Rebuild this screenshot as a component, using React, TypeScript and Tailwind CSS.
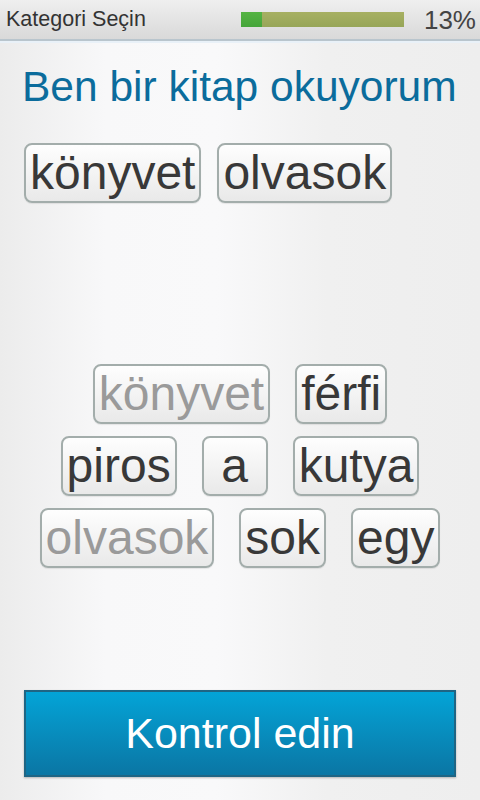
import React from 'react';

interface Word {
  text: string;
  used?: boolean;
}

const answer: Word[] = [{ text: 'könyvet' }, { text: 'olvasok' }];

const bankRows: Word[][] = [
  [{ text: 'könyvet', used: true }, { text: 'férfi' }],
  [{ text: 'piros' }, { text: 'a' }, { text: 'kutya' }],
  [{ text: 'olvasok', used: true }, { text: 'sok' }, { text: 'egy' }],
];

function Chip({ word }: { word: Word }) {
  return (
    <div
      className={`flex h-[60px] min-w-[66px] items-center justify-center rounded-[8px] border-2 border-[#a3adab] bg-gradient-to-b from-[#fefefe] to-[#e9e9e9] px-[4px] text-[48px] leading-none shadow-[0_1px_1px_rgba(0,0,0,0.08)] ${
        word.used ? 'text-[#9a9a9a]' : 'text-[#383838]'
      }`}
    >
      {word.text}
    </div>
  );
}

export default function App() {
  return (
    <div className="flex h-[800px] w-[480px] flex-col overflow-hidden bg-[linear-gradient(to_right,#ececec_0%,#f8f8f9_22%,#f9f9fa_45%,#f0f0f0_68%,#eeeeee_100%)] font-['Liberation_Sans',Arial,sans-serif]">
      <div className="flex h-[39px] items-center bg-gradient-to-b from-[#efefef] to-[#d9d9d9] pl-[6px] pr-[4px]">
        <span className="text-[21.5px] text-[#333333]">Kategori Seçin</span>
        <div className="ml-auto flex h-[15px] w-[163px] bg-gradient-to-b from-[#a7b062] to-[#97a658]">
          <div className="h-full w-[21px] bg-gradient-to-b from-[#55b443] to-[#45a53a]" />
        </div>
        <span className="ml-[20px] text-[26px] leading-none text-[#444444]">13%</span>
      </div>
      <div className="h-[2px] bg-[#b9c5cd]" />
      <div className="h-[2px] bg-[#e9f1f8]" />

      <h1 className="mt-[23px] pl-[22px] text-[42.5px] leading-none text-[#0b6c9c]">Ben bir kitap okuyorum</h1>

      <div className="mt-[34px] flex gap-[16px] pl-[24px]">
        {answer.map((w, i) => (
          <Chip key={i} word={w} />
        ))}
      </div>

      <div className="mt-[161px] flex flex-col items-center gap-[12px]">
        {bankRows.map((row, r) => (
          <div key={r} className="flex gap-[25px]">
            {row.map((w, i) => (
              <Chip key={i} word={w} />
            ))}
          </div>
        ))}
      </div>

      <button className="mx-[24px] mt-[122px] flex h-[87px] items-center justify-center border-2 border-[#1f6584] bg-gradient-to-b from-[#03a4d7] to-[#0a76a4] text-[43px] text-white shadow-[0_1px_2px_rgba(0,0,0,0.25)]">
        Kontrol edin
      </button>
    </div>
  );
}
